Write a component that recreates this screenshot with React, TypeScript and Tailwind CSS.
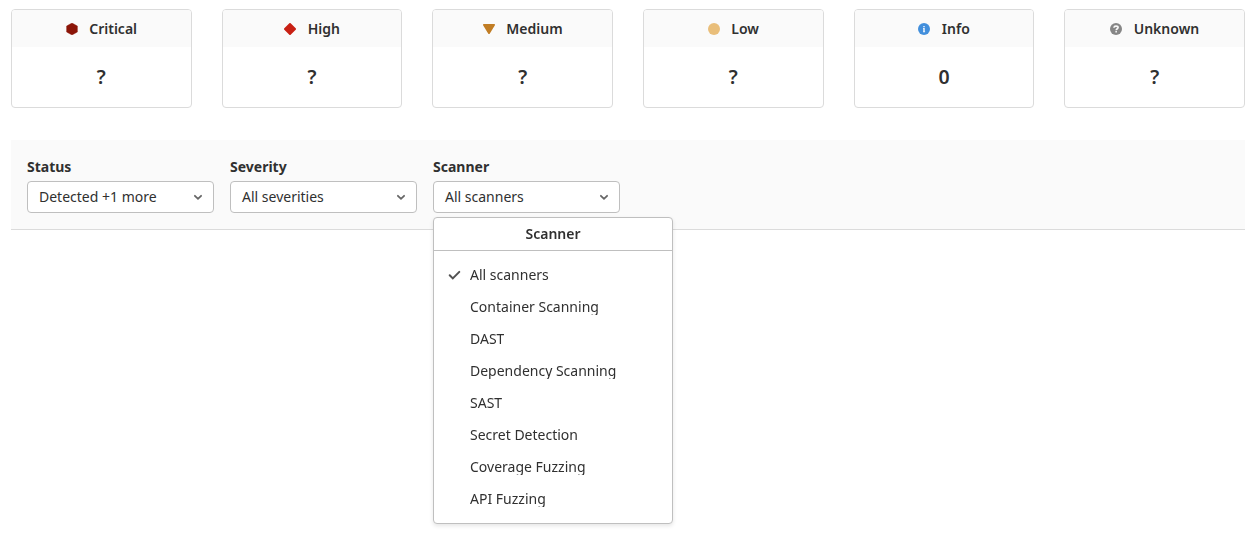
import type { ReactNode } from 'react';

type Severity = { name: string; count: string; icon: ReactNode };

const severities: Severity[] = [
  { name: 'Critical', count: '?', icon: <path fill="#8b1508" d="M6 0l5.400 3v6L6 12 .6 9V3z" stroke="#8b1508" strokeWidth=".4" strokeLinejoin="round" /> },
  { name: 'High', count: '?', icon: <path fill="#c82014" d="M5.350.3a.9.9 0 0 1 1.300 0l5.050 5.050a.9.9 0 0 1 0 1.300L6.650 11.700a.9.9 0 0 1-1.300 0L.3 6.650a.9.9 0 0 1 0-1.300z" /> },
  { name: 'Medium', count: '?', icon: <path fill="#c17d24" d="M.8 1h10.400c.7 0 1 .6.7 1.200L6.700 10.700c-.3.5-1.100.5-1.400 0L.1 2.200C-.2 1.600.1 1 .8 1z" /> },
  { name: 'Low', count: '?', icon: <circle cx="6" cy="6" r="6" fill="#e9be7a" /> },
  {
    name: 'Info',
    count: '0',
    icon: (
      <>
        <circle cx="6" cy="6" r="6" fill="#428fdc" />
        <path fill="#e4eefa" d="M5.200 2.900h1.600v1.300H5.200zM5 5h1.800v3.300h.3v.9H5v-.9h.2V5.900H5z" />
      </>
    ),
  },
  {
    name: 'Unknown',
    count: '?',
    icon: (
      <>
        <circle cx="6" cy="6" r="6" fill="#868686" />
        <path fill="none" stroke="#fafafa" strokeWidth="1.600" d="M3.900 4.700C4 3.600 4.900 3.100 6 3.100s2.100.5 2.100 1.500C8.100 5.800 6.200 5.700 6.200 7.300" />
        <path fill="#fafafa" d="M5.400 8h1.500v1.400H5.400z" />
      </>
    ),
  },
];

const filters = [
  { label: 'Status', value: 'Detected +1 more' },
  { label: 'Severity', value: 'All severities' },
  { label: 'Scanner', value: 'All scanners' },
];

const scanners = [
  'All scanners',
  'Container Scanning',
  'DAST',
  'Dependency Scanning',
  'SAST',
  'Secret Detection',
  'Coverage Fuzzing',
  'API Fuzzing',
];

function SeverityCard({ name, count, icon }: Severity) {
  return (
    <div className="flex h-[99px] flex-col overflow-hidden rounded border border-[#dbdbdb] bg-white font-semibold">
      <div className="flex h-[37px] shrink-0 items-center justify-center bg-[#fafafa]">
        <svg className="mr-[11.64px] size-3 shrink-0" viewBox="0 0 12 12">{icon}</svg>
        <span>{name}</span>
      </div>
      <div className="flex flex-1 items-center justify-center text-[19.5px] leading-5">{count}</div>
    </div>
  );
}

function ScannerMenu() {
  return (
    <div className="absolute top-full left-0 z-10 mt-1 h-[307px] w-60 rounded border border-[#bfbfbf] bg-white shadow-[0_2px_4px_rgba(0,0,0,0.1)] will-change-transform">
      <div className="flex h-[33px] items-center justify-center border-b border-[#bfbfbf] font-semibold">Scanner</div>
      <ul className="pt-2">
        {scanners.map((scanner, index) => (
          <li key={scanner} className="flex h-8 items-center pl-3">
            <span className="mr-2 size-4 shrink-0">
              {index === 0 && (
                <svg className="size-4" viewBox="0 0 16 16" fill="none" stroke="#525252" strokeWidth="2" strokeLinecap="round">
                  <path d="M3.700 8.300l3.100 3.100 6.500-6.500" />
                </svg>
              )}
            </span>
            <span className="h-4 overflow-hidden leading-4">{scanner}</span>
          </li>
        ))}
      </ul>
    </div>
  );
}

export default function App() {
  return (
    <main className="h-[538px] bg-white pt-[9px] pr-[7px] pl-[11px] font-['Noto_Sans',sans-serif] text-sm leading-5 text-[#303030]">
      <section className="grid grid-cols-6 gap-[30px]">
        {severities.map((severity) => (
          <SeverityCard key={severity.name} {...severity} />
        ))}
      </section>
      <section className="mt-8 flex h-[90px] gap-4 border-b border-[#dbdbdb] bg-[#fafafa] px-4 pt-[17px]">
        {filters.map(({ label, value }) => (
          <div key={label} className="w-[187px]">
            <div className="mb-1 font-bold">{label}</div>
            <div className="relative">
              <button className="flex h-8 w-full items-center justify-between rounded border border-[#bfbfbf] bg-white pr-[7px] pl-[11px]">
                <span>{value}</span>
                <svg className="size-4" viewBox="0 0 16 16" fill="none" stroke="#666" strokeWidth="1.800" strokeLinecap="round">
                  <path d="M4.900 6.800L8 9.800l3.100-3" />
                </svg>
              </button>
              {label === 'Scanner' && <ScannerMenu />}
            </div>
          </div>
        ))}
      </section>
    </main>
  );
}
